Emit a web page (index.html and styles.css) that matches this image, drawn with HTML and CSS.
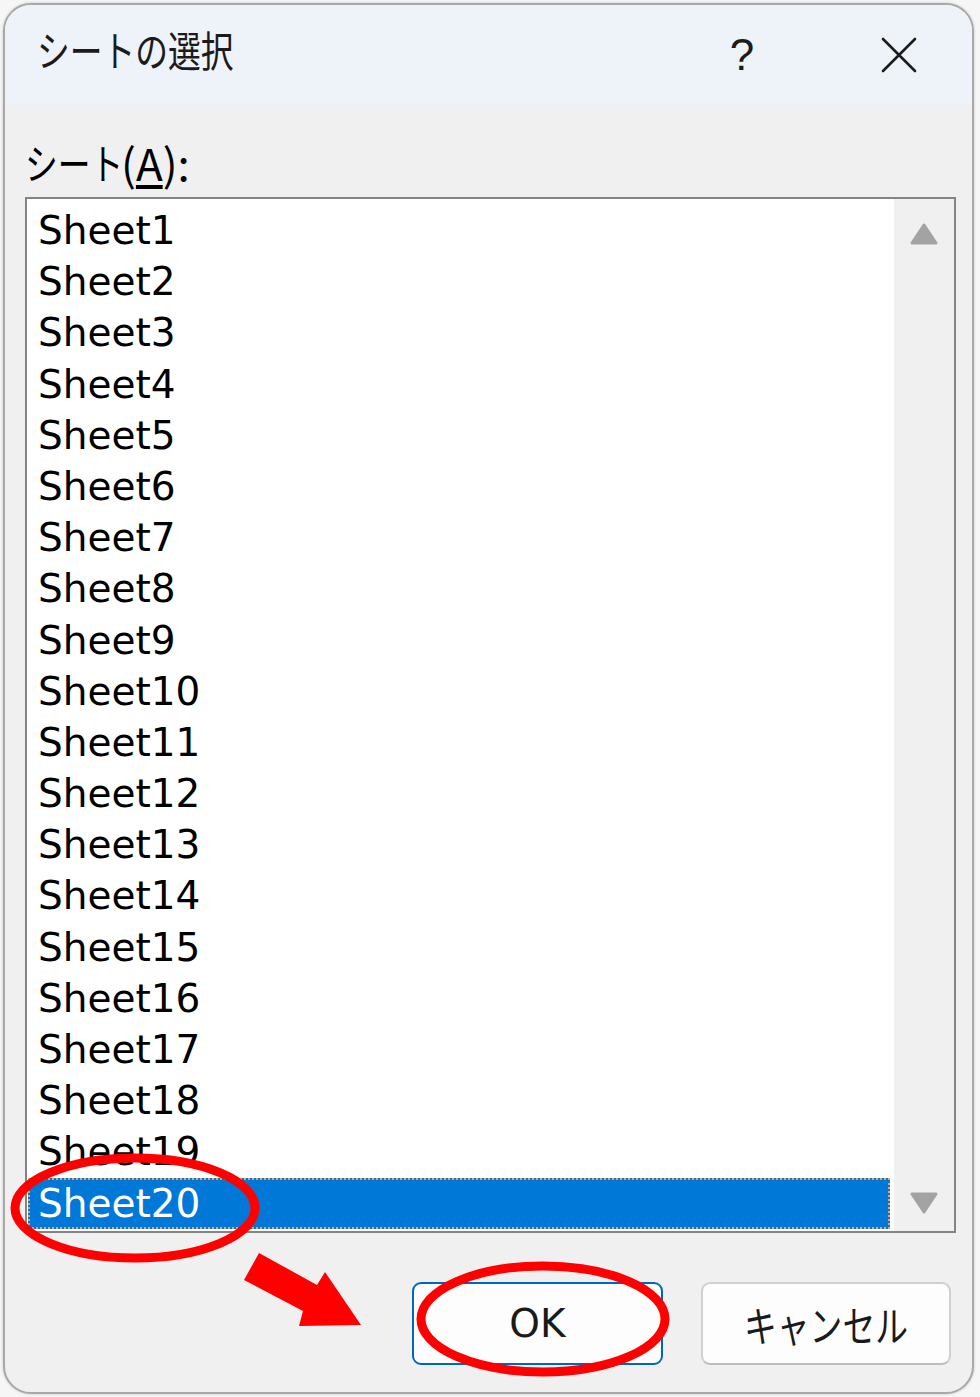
FILE: index.html
```html
<!DOCTYPE html>
<html>
<head>
    <meta charset="utf-8">
    <title>シートの選択</title>
    <link rel="stylesheet" href="styles.css">
</head>
<body>
    <div class="dialog">
        <div class="titlebar">
            <div class="title"><span class="jp">シートの選択</span></div>
            <div class="help">?</div>
            <div class="close">
                <svg width="36" height="36" viewBox="0 0 36 36">
                    <path d="M2 2 L34 34 M34 2 L2 34" stroke="#1b1b1b" stroke-width="2.6" stroke-linecap="round" fill="none"/>
                </svg>
            </div>
        </div>
        <div class="content">
            <div class="label"><span class="jp short">シート</span><span class="accel">(<u>A</u>):</span></div>
            <div class="listbox">
                <div class="items">
                    <div class="row">Sheet1</div>
                    <div class="row">Sheet2</div>
                    <div class="row">Sheet3</div>
                    <div class="row">Sheet4</div>
                    <div class="row">Sheet5</div>
                    <div class="row">Sheet6</div>
                    <div class="row">Sheet7</div>
                    <div class="row">Sheet8</div>
                    <div class="row">Sheet9</div>
                    <div class="row">Sheet10</div>
                    <div class="row">Sheet11</div>
                    <div class="row">Sheet12</div>
                    <div class="row">Sheet13</div>
                    <div class="row">Sheet14</div>
                    <div class="row">Sheet15</div>
                    <div class="row">Sheet16</div>
                    <div class="row">Sheet17</div>
                    <div class="row">Sheet18</div>
                    <div class="row">Sheet19</div>
                    <div class="row selected">Sheet20</div>
                </div>
                <div class="scrollbar">
                    <svg width="28" height="22" viewBox="0 0 28 22">
                        <path d="M14 2 L26 20 L2 20 Z" fill="#a3a3a3" stroke="#a3a3a3" stroke-width="3" stroke-linejoin="round"/>
                    </svg>
                    <svg width="28" height="22" viewBox="0 0 28 22">
                        <path d="M2 2 L26 2 L14 20 Z" fill="#a3a3a3" stroke="#a3a3a3" stroke-width="3" stroke-linejoin="round"/>
                    </svg>
                </div>
            </div>
            <div class="buttons">
                <div class="btn primary">OK</div>
                <div class="btn"><span class="jp">キャンセル</span></div>
            </div>
        </div>
    </div>

    <!-- red markup drawn over the dialog -->
    <svg class="marks" width="980" height="1397" viewBox="0 0 980 1397">
        <ellipse cx="135" cy="1208" rx="120" ry="50" fill="none" stroke="#ff0000" stroke-width="9"/>
        <ellipse cx="543" cy="1319" rx="122" ry="53" fill="none" stroke="#ff0000" stroke-width="9"/>
        <polygon points="259,1253 317,1285 325,1272 361,1325 299,1326 303,1311 244,1280" fill="#ff0000"/>
    </svg>
</body>
</html>
```

FILE: styles.css
```css
*
{
    margin: 0px;
    padding: 0px;
    box-sizing: border-box;
}
body
{
    width: 980px;
    height: 1397px;
    background-color: #f6f6f6;
    font-family: "DejaVu Sans", sans-serif;
    color: #000;
    overflow: hidden;
    position: relative;
}
.jp
{
    display: inline-block;
    font-family: "Noto Sans CJK JP", sans-serif;
    font-size: 42px;
    transform: scaleX(0.78);
    transform-origin: left center;
    white-space: nowrap;
}
.dialog
{
    margin: 3px 0px 0px 3px;
    width: 971px;
    height: 1391px;
    border: 2px solid #a9a9a9;
    border-radius: 28px;
    background-color: #f0f0f0;
    overflow: hidden;
    display: flex;
    flex-direction: column;
    box-shadow: 0px 0px 3px rgba(0, 0, 0, 0.2);
}
.titlebar
{
    height: 100px;
    flex: none;
    background-color: #eef2f9;
    display: flex;
    align-items: center;
    padding-left: 32px;
    padding-right: 55px;
    color: #1b1b1b;
}
.title
{
    flex: 1;
    line-height: 50px;
}
.help
{
    width: 40px;
    text-align: center;
    font-family: "Liberation Sans", sans-serif;
    font-size: 44px;
    line-height: 50px;
    margin-right: 119px;
}
.close
{
    width: 36px;
    height: 36px;
}
.close svg
{
    display: block;
}
.content
{
    flex: 1;
    padding: 32px 16px 0px 20px;
    display: flex;
    flex-direction: column;
}
.label
{
    height: 50px;
    line-height: 50px;
    color: #000;
    white-space: nowrap;
}
.label .short
{
    margin-right: -30px;
}
.accel
{
    font-family: "Noto Sans CJK JP", sans-serif;
    font-size: 44px;
    vertical-align: top;
}
.label u
{
    text-underline-offset: 4px;
}
.listbox
{
    margin-top: 10px;
    height: 1036px;
    border: 2px solid #848484;
    background-color: #fff;
    display: flex;
    overflow: hidden;
}
.items
{
    flex: 1;
    padding-top: 6px;
    overflow: hidden;
}
.row
{
    height: 51.2px;
    line-height: 51.2px;
    padding-left: 11px;
    font-size: 39px;
    white-space: nowrap;
}
.row.selected
{
    margin: 0px 4px 0px 1px;
    padding-left: 8px;
    line-height: 47px;
    background-color: #0078d7;
    color: #fff;
    border: 2px dotted #f2a35a;
}
.scrollbar
{
    width: 60px;
    flex: none;
    background-color: #f0f0f0;
    display: flex;
    flex-direction: column;
    justify-content: space-between;
    align-items: center;
    padding: 24px 0px 17px 0px;
}
.scrollbar svg
{
    display: block;
}
.buttons
{
    display: flex;
    justify-content: flex-end;
    gap: 38px;
    padding-top: 49px;
    padding-right: 5px;
}
.btn
{
    width: 250px;
    height: 83px;
    border: 2px solid #d0d0d0;
    border-bottom-color: #bcbcbc;
    border-radius: 9px;
    background-color: #fdfdfd;
    display: flex;
    align-items: center;
    justify-content: center;
    font-size: 39px;
    color: #1a1a1a;
}
.btn .jp
{
    transform-origin: center center;
    margin: 0px -20px;
}
.btn.primary
{
    width: 251px;
    border: 2px solid #0067c0;
}
.marks
{
    position: absolute;
    top: 0px;
    left: 0px;
    pointer-events: none;
}
```
